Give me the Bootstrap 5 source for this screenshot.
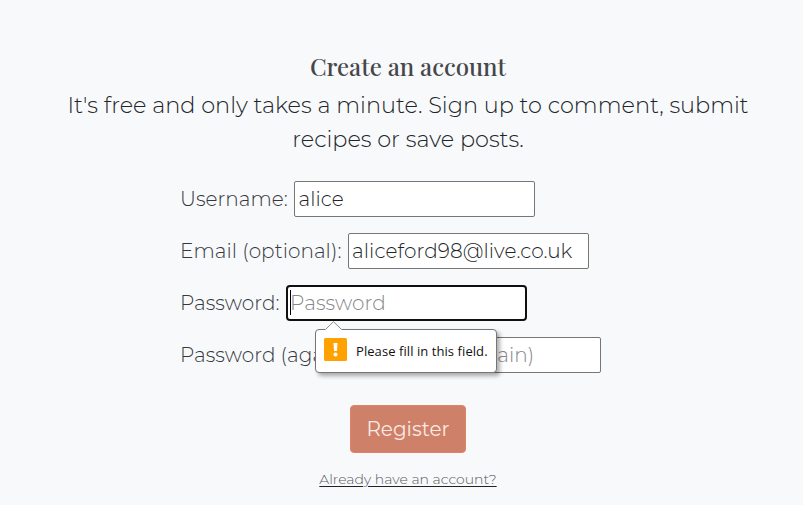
<!DOCTYPE html>
<html lang="en">
<head>
<meta charset="utf-8">
<meta name="viewport" content="width=device-width, initial-scale=1">
<title>Create an account</title>
<link href="https://cdn.jsdelivr.net/npm/bootstrap@5.3.0/dist/css/bootstrap.min.css" rel="stylesheet">
<style>
body{background:#f8f9fb;color:#212529;font-family:Montserrat,Inter,sans-serif;font-weight:300;font-size:20px;overflow:hidden}
.signup{width:702px;margin-left:57px;padding-top:49px}
.signup-title{font-family:"Playfair Display","Liberation Serif",serif;font-size:24px;line-height:34px;font-weight:500;color:#45474b}
.signup-lead{font-size:22.42px;line-height:34px;margin-top:5px}
.signup-form{margin-left:123px;margin-top:25px;gap:16px}
.field-row{height:36px;gap:6.6px}
.field-row label{white-space:nowrap;letter-spacing:.05px;color:#34373b}
.field-box{width:241px;height:36px;border:1px solid #767676;border-radius:2px;padding:0 3px;background:#fff;color:#212529;font-weight:300;letter-spacing:.1px;outline:0}
.field-box::placeholder{color:#85878a;opacity:1}
.field-focus{border:2px solid #101010;border-radius:4px;padding:0 2px}
.caret{left:4px;top:5px;width:1px;height:25px;background:#000}
.tip{left:315px;top:329px;width:182px;height:44px;background:#fff;border:1px solid #767676;border-radius:4px;box-shadow:3px 3px 4px rgba(0,0,0,.32);padding-left:8px;gap:9px;font-family:"Open Sans","Noto Sans",sans-serif;font-size:13px;font-weight:400;letter-spacing:.07px;color:#111}
.tip-arrow{left:9px;top:-9px}
.tip-icon{margin-bottom:3px}
.tip-text{padding-top:2px}
.btn-register{width:116px;height:48px;background:#cf8069;border:1px solid #e08468;border-radius:4px;color:#fbe9e4;font-size:20px;font-weight:400;margin-top:32px;padding:0}
.btn-register:hover{background:#cf8069;color:#fbe9e4}
.login-link{font-size:14px;line-height:20px;margin-top:16px;color:#55585c;text-decoration-color:#222;text-underline-offset:2px}
</style>
</head>
<body>
<main class="signup">
<h1 class="signup-title text-center mb-0">Create an account</h1>
<p class="signup-lead text-center mb-0">It's free and only takes a minute. Sign up to comment, submit<br>recipes or save posts.</p>
<form class="signup-form d-flex flex-column">
<div class="field-row d-flex align-items-center"><label for="u">Username:</label><input class="field-box" id="u" value="alice"></div>
<div class="field-row d-flex align-items-center"><label for="e">Email (optional):</label><input class="field-box" id="e" value="aliceford98@live.co.uk"></div>
<div class="field-row d-flex align-items-center"><label for="p">Password:</label><span class="position-relative d-flex"><input class="field-box field-focus" id="p" placeholder="Password"><span class="caret position-absolute"></span></span></div>
<div class="field-row d-flex align-items-center"><label for="q">Password (again):</label><input class="field-box" id="q" placeholder="Password (again)"></div>
</form>
<div class="d-flex flex-column align-items-center">
<button class="btn btn-register" type="button">Register</button>
<a class="login-link" href="#">Already have an account?</a>
</div>
</main>
<div class="tip position-absolute d-flex align-items-center">
<svg class="tip-arrow position-absolute" width="18" height="10" viewBox="0 0 18 10"><path d="M0 10V9L8.5 .5L17 9V10Z" fill="#fff"/><path d="M.5 8.5L8.5 .7L16.5 8.5" fill="none" stroke="#8a8a8a"/></svg>
<svg class="tip-icon" width="23" height="23" viewBox="0 0 23 23"><rect width="23" height="23" rx="1.5" fill="#ffa200"/><path d="M9.5 5h4l-.5 8h-3z" fill="#fff"/><circle cx="11.5" cy="16.5" r="2" fill="#fff"/></svg>
<span class="tip-text">Please fill in this field.</span>
</div>
<script src="https://cdn.jsdelivr.net/npm/bootstrap@5.3.0/dist/js/bootstrap.bundle.min.js"></script>
</body>
</html>
